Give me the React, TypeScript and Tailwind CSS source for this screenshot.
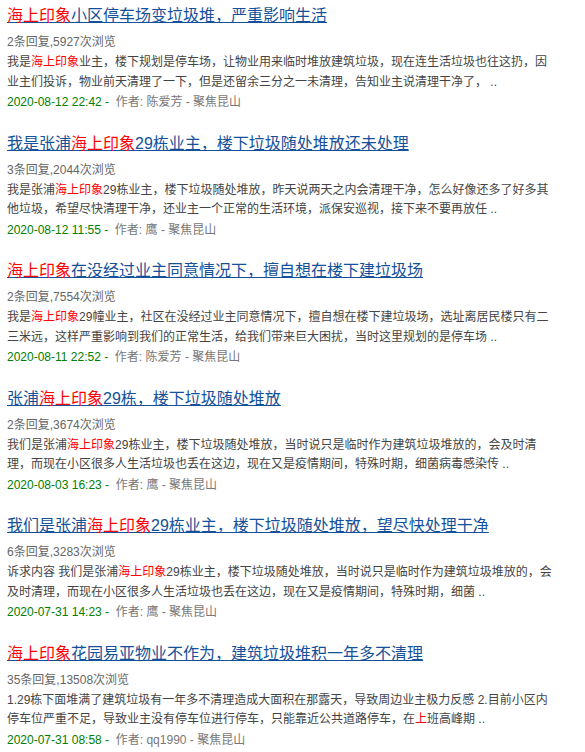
import React from "react";

type Seg = string | { hl: string };

type Post = {
  title: Seg[];
  replies: number;
  views: number;
  lines: Seg[][];
  date: string;
  author: string;
};

const HL = { hl: "海上印象" };

const POSTS: Post[] = [
  {
    title: [HL, "小区停车场变垃圾堆，严重影响生活"],
    replies: 2,
    views: 5927,
    lines: [
      ["我是", HL, "业主，楼下规划是停车场，让物业用来临时堆放建筑垃圾，现在连生活垃圾也往这扔，因"],
      ["业主们投诉，物业前天清理了一下，但是还留余三分之一未清理，告知业主说清理干净了， .."],
    ],
    date: "2020-08-12 22:42",
    author: "陈爱芳",
  },
  {
    title: ["我是张浦", HL, "29栋业主，楼下垃圾随处堆放还未处理"],
    replies: 3,
    views: 2044,
    lines: [
      ["我是张浦", HL, "29栋业主，楼下垃圾随处堆放，昨天说两天之内会清理干净，怎么好像还多了好多其"],
      ["他垃圾，希望尽快清理干净，还业主一个正常的生活环境，派保安巡视，接下来不要再放任 .."],
    ],
    date: "2020-08-12 11:55",
    author: "鹰",
  },
  {
    title: [HL, "在没经过业主同意情况下，擅自想在楼下建垃圾场"],
    replies: 2,
    views: 7554,
    lines: [
      ["我是", HL, "29幢业主，社区在没经过业主同意情况下，擅自想在楼下建垃圾场，选址离居民楼只有二"],
      ["三米远，这样严重影响到我们的正常生活，给我们带来巨大困扰，当时这里规划的是停车场 .."],
    ],
    date: "2020-08-11 22:52",
    author: "陈爱芳",
  },
  {
    title: ["张浦", HL, "29栋，楼下垃圾随处堆放"],
    replies: 2,
    views: 3674,
    lines: [
      ["我们是张浦", HL, "29栋业主，楼下垃圾随处堆放，当时说只是临时作为建筑垃圾堆放的，会及时清"],
      ["理，而现在小区很多人生活垃圾也丢在这边，现在又是疫情期间，特殊时期，细菌病毒感染传 .."],
    ],
    date: "2020-08-03 16:23",
    author: "鹰",
  },
  {
    title: ["我们是张浦", HL, "29栋业主，楼下垃圾随处堆放，望尽快处理干净"],
    replies: 6,
    views: 3283,
    lines: [
      ["诉求内容 我们是张浦", HL, "29栋业主，楼下垃圾随处堆放，当时说只是临时作为建筑垃圾堆放的，会"],
      ["及时清理，而现在小区很多人生活垃圾也丢在这边，现在又是疫情期间，特殊时期，细菌 .."],
    ],
    date: "2020-07-31 14:23",
    author: "鹰",
  },
  {
    title: [HL, "花园易亚物业不作为，建筑垃圾堆积一年多不清理"],
    replies: 35,
    views: 13508,
    lines: [
      ["1.29栋下面堆满了建筑垃圾有一年多不清理造成大面积在那露天，导致周边业主极力反感 2.目前小区内"],
      ["停车位严重不足，导致业主没有停车位进行停车，只能靠近公共道路停车，在", { hl: "上" }, "班高峰期 .."],
    ],
    date: "2020-07-31 08:58",
    author: "qq1990",
  },
];

function Segs({ segs }: { segs: Seg[] }) {
  return (
    <>
      {segs.map((s, i) =>
        typeof s === "string" ? (
          <span key={i}>{s}</span>
        ) : (
          <span key={i} className="text-[#ff0000]">
            {s.hl}
          </span>
        )
      )}
    </>
  );
}

function PostItem({ post }: { post: Post }) {
  return (
    <div className="mb-[19.6px]">
      <a
        href="#"
        className="block whitespace-nowrap text-[16px] leading-6 text-[#15519b] underline decoration-[#15519b]"
      >
        <Segs segs={post.title} />
      </a>
      <div className="mt-[3px] text-[12px] leading-[22px] text-[#666]">
        {post.replies}条回复,{post.views}次浏览
      </div>
      <div className="text-[12px] leading-[19.5px] text-[#444]">
        {post.lines.map((l, i) => (
          <div key={i} className="whitespace-nowrap">
            <Segs segs={l} />
          </div>
        ))}
      </div>
      <div className="whitespace-pre text-[12px] leading-5">
        <span className="text-[#008000]">{post.date} - </span>
        <span className="text-[#777]"> 作者: {post.author} - 聚焦昆山</span>
      </div>
    </div>
  );
}

export default function App() {
  return (
    <div
      className="min-h-[752px] w-[585px] overflow-hidden bg-white pl-[7px] pt-[4px]"
      style={{ fontFamily: '"Liberation Sans", Arial, "Noto Sans CJK SC", sans-serif' }}
    >
      {POSTS.map((p, i) => (
        <PostItem key={i} post={p} />
      ))}
    </div>
  );
}
